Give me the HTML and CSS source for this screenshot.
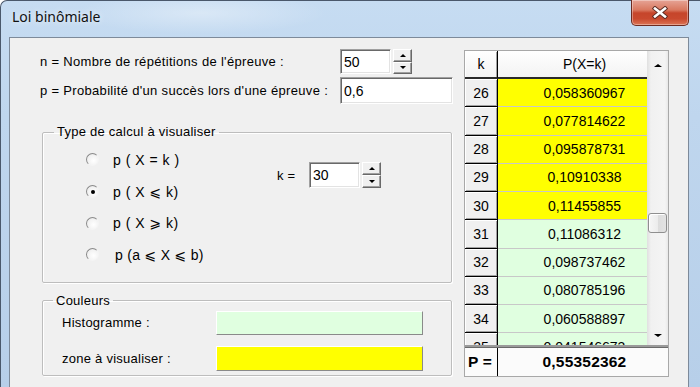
FILE: index.html
```html
<!DOCTYPE html>
<html lang="fr">
<head>
<meta charset="utf-8">
<title>Loi binômiale</title>
<link rel="stylesheet" href="styles.css">
</head>
<body>
<div class="window">
  <div class="titlebar">
    <span class="title">Loi binômiale</span>
    <span class="close">
      <svg width="18" height="13" viewBox="0 0 18 13">
        <path d="M4 2.5 L14 10.5 M14 2.5 L4 10.5" stroke="#5a2a22" stroke-width="4.4" stroke-linecap="square"/>
        <path d="M4 2.5 L14 10.5 M14 2.5 L4 10.5" stroke="#ffffff" stroke-width="2.6" stroke-linecap="square"/>
      </svg>
    </span>
  </div>
  <div class="client">
    <div class="left">
      <div class="param">
        <span class="plabel">n = Nombre de répétitions de l'épreuve :</span>
        <span class="edit edit-n">50</span>
        <span class="spinner"><span class="sbtn"><span class="tri up"></span></span><span class="sbtn"><span class="tri down"></span></span></span>
      </div>
      <div class="param param-p">
        <span class="plabel">p = Probabilité d'un succès lors d'une épreuve :</span>
        <span class="edit edit-p">0,6</span>
      </div>
      <fieldset class="group group-type">
        <legend>Type de calcul à visualiser</legend>
        <div class="type-body">
          <ul class="radios">
            <li><span class="radio"></span><span class="rlabel">p ( X = k )</span></li>
            <li><span class="radio checked"></span><span class="rlabel">p ( X ⩽ k)</span></li>
            <li><span class="radio"></span><span class="rlabel">p ( X ⩾ k)</span></li>
            <li><span class="radio"></span><span class="rlabel r4">p (a ⩽ X ⩽ b)</span></li>
          </ul>
          <div class="kfield">
            <span class="klabel">k =</span>
            <span class="edit edit-k">30</span>
            <span class="spinner"><span class="sbtn"><span class="tri up"></span></span><span class="sbtn"><span class="tri down"></span></span></span>
          </div>
        </div>
      </fieldset>
      <fieldset class="group group-colors">
        <legend>Couleurs</legend>
        <div class="color-row"><span class="clabel">Histogramme :</span><span class="swatch green"></span></div>
        <div class="color-row second"><span class="clabel">zone à visualiser :</span><span class="swatch yellow"></span></div>
      </fieldset>
    </div>
    <div class="datagrid">
      <div class="viewport">
        <div class="cells">
          <div class="hd hk">k</div><div class="hd hp">P(X=k)</div>
          <div class="kc">26</div><div class="vc y">0,058360967</div>
          <div class="kc">27</div><div class="vc y">0,077814622</div>
          <div class="kc">28</div><div class="vc y">0,095878731</div>
          <div class="kc">29</div><div class="vc y">0,10910338</div>
          <div class="kc">30</div><div class="vc y">0,11455855</div>
          <div class="kc">31</div><div class="vc g">0,11086312</div>
          <div class="kc">32</div><div class="vc g">0,098737462</div>
          <div class="kc">33</div><div class="vc g">0,080785196</div>
          <div class="kc">34</div><div class="vc g">0,060588897</div>
          <div class="kc">35</div><div class="vc g">0,041546673</div>
        </div>
        <div class="vscroll">
          <div class="sarrow"><span class="tri up"></span></div>
          <div class="track"><div class="thumb"></div></div>
          <div class="sarrow bottom"><span class="tri down"></span></div>
        </div>
      </div>
      <div class="sep"></div>
      <div class="total">
        <span class="tlabel">P =</span>
        <span class="tvalue">0,55352362</span>
      </div>
    </div>
  </div>
</div>
</body>
</html>
```
FILE: styles.css
```css
* { box-sizing: border-box; }
html, body { margin: 0; padding: 0; }
body {
  width: 700px;
  height: 387px;
  overflow: hidden;
  font-family: "Liberation Sans", Arial, "DejaVu Sans", sans-serif;
  font-size: 13px;
  letter-spacing: 0.25px;
  color: #000;
  background: #fff;
}

.window {
  width: 700px;
  height: 387px;
  display: flex;
  flex-direction: column;
  border-left: 1px solid #4a586b;
  border-top: 1px solid #4a586b;
  border-top-left-radius: 7px;
  background:
    radial-gradient(ellipse 180px 30px at 200px 12px, rgba(255,255,255,0.35), rgba(255,255,255,0) 70%),
    linear-gradient(180deg, #c6dcf2 0%, #bfd6ee 30%, #b7cfe9 100%);
}

.titlebar {
  height: 36px;
  display: flex;
  align-items: flex-start;
  flex: none;
}
.title {
  font-family: "Noto Sans", "Open Sans", sans-serif;
  font-size: 14px;
  letter-spacing: 0;
  line-height: 20px;
  margin: 6px 0 0 11px;
  color: #111;
  text-shadow: 0 0 6px rgba(255,255,255,0.9);
}
.close {
  margin: -1px 11px 0 auto;
  width: 58px;
  height: 26px;
  display: flex;
  align-items: center;
  justify-content: center;
  border: 1px solid #6e2b21;
  border-top: none;
  border-radius: 0 0 5px 5px;
  background: linear-gradient(180deg, #e6a496 0%, #d9785f 40%, #c6452b 52%, #c9492e 75%, #dc7455 100%);
  box-shadow: inset 0 0 0 1px rgba(255,255,255,0.35);
}
.close svg { display: block; }

.client {
  flex: 1;
  margin: 0 11px 0 8px;
  border: 1px solid #7d8a9a;
  border-bottom: none;
  background: #f0f0f0;
  display: flex;
  align-items: flex-start;
  padding: 11px 0 0 30px;
}

.left { width: 413px; flex: none; }

.param {
  display: flex;
  align-items: center;
  height: 25px;
}
.param-p { margin-top: 3px; height: 27px; }
.plabel { width: 300px; flex: none; letter-spacing: 0.32px; }

.edit {
  display: flex;
  align-items: center;
  height: 100%;
  padding: 0 0 0 3px;
  background: #fff;
  font-size: 14px;
  letter-spacing: 0;
  border: 1px solid;
  border-color: #a0a0a0 #ffffff #ffffff #a0a0a0;
  box-shadow: inset 1px 1px 0 #696969, inset -1px -1px 0 #e3e3e3;
}
.edit-n { width: 51px; }
.edit-p { width: 113px; }
.edit-k { width: 51px; height: 26px; }

.spinner {
  display: flex;
  flex-direction: column;
  width: 19px;
  height: 25px;
  margin-left: 2px;
}
.sbtn {
  flex: 1;
  display: flex;
  align-items: center;
  justify-content: center;
  background: #f0f0f0;
  border: 1px solid;
  border-color: #ffffff #696969 #696969 #ffffff;
  box-shadow: inset -1px -1px 0 #a0a0a0;
}
.tri {
  width: 0;
  height: 0;
  border-left: 3px solid transparent;
  border-right: 3px solid transparent;
}
.tri.up { border-bottom: 3px solid #000; }
.tri.down { border-top: 3px solid #000; }

.group {
  margin: 20px 0 0 2px;
  padding: 0;
  width: 410px;
  border: 1px solid #bdbdbd;
  border-radius: 2px;
  box-shadow: 1px 1px 0 #fff, inset 1px 1px 0 #fff;
}
.group legend {
  margin-left: 11px;
  padding: 0 3px;
  line-height: 16px;
}

.type-body {
  display: flex;
  align-items: flex-start;
  padding: 4px 0 11px 0;
}
.radios {
  list-style: none;
  margin: 0;
  padding: 0 0 0 43px;
  width: 234px;
  flex: none;
}
.radios li {
  height: 31.7px;
  display: flex;
  align-items: center;
}
.radio {
  width: 13px;
  height: 13px;
  border-radius: 50%;
  flex: none;
  border: 1px solid;
  border-color: #8a8a8a #f4f4f4 #f4f4f4 #8a8a8a;
  background: radial-gradient(circle at 60% 60%, #ffffff 0%, #f2f2f2 60%, #dcdcdc 100%);
  position: relative;
}
.radio.checked::after {
  content: "";
  position: absolute;
  left: 3.5px;
  top: 3.5px;
  width: 4px;
  height: 4px;
  border-radius: 50%;
  background: #000;
}
.rlabel {
  margin-left: 14px;
  font-size: 14px;
  letter-spacing: 0.5px;
}
.r4 { margin-left: 16px; letter-spacing: 0.3px; }

.kfield {
  display: flex;
  align-items: center;
  height: 26px;
  margin-top: 18px;
}
.klabel { width: 32px; flex: none; }
.kfield .spinner { height: 26px; margin-left: 2px; }

.group-colors { margin-top: 10px; }
.group-colors legend { margin-left: 10px; }
.color-row {
  display: flex;
  align-items: center;
  height: 24px;
  margin-top: 2px;
}
.color-row.second { margin-top: 11px; height: 25px; margin-bottom: 4px; }
.clabel {
  width: 173px;
  flex: none;
  padding-left: 19px;
}
.swatch {
  width: 207px;
  height: 100%;
  border: 1px solid;
  border-color: #ffffff #8a8a8a #8a8a8a #ffffff;
}
.swatch.green { background: #e0ffe0; }
.swatch.yellow { background: #ffff00; }

.datagrid {
  margin: 1px 0 0 11px;
  width: 205px;
  height: 327px;
  flex: none;
  border: 1px solid #a8a8a8;
  background: #fff;
  display: flex;
  flex-direction: column;
}
.viewport {
  display: flex;
  height: 294px;
  overflow: hidden;
  flex: none;
}
.cells {
  width: 182px;
  flex: none;
  display: grid;
  grid-template-columns: 33px 149px;
  grid-template-rows: 28px;
  grid-auto-rows: 28.25px;
  align-content: start;
  font-size: 14px;
  letter-spacing: 0;
}
.hd, .kc, .vc {
  display: flex;
  align-items: center;
  justify-content: center;
}
.hd {
  background: linear-gradient(180deg, #ffffff, #f3f3f3);
  border-bottom: 2px solid #2a2a2a;
}
.hk {
  border-right: 1px solid #000;
  box-shadow: inset 1px 1px 0 #fff, inset -1px 0 0 #a0a0a0;
}
.hp { padding-left: 24px; }
.kc {
  background: #f0f0f0;
  border-right: 1px solid #000;
  border-bottom: 1px solid #000;
  box-shadow: inset 1px 1px 0 #fff, inset -1px -1px 0 #a0a0a0;
}
.vc {
  padding-left: 24px;
  border-bottom: 1px solid #c8c8c8;
}
.vc.y { background: #ffff00; }
.vc.g { background: #e0ffe0; }

.vscroll {
  width: 21px;
  flex: none;
  display: flex;
  flex-direction: column;
  background: linear-gradient(90deg, #e4e4e4 0%, #f1f1f1 15%, #f4f4f4 85%, #e8e8e8 100%);
  border-left: 1px solid #e2e2e2;
}
.sarrow {
  height: 26px;
  flex: none;
  display: flex;
  align-items: center;
  justify-content: center;
  padding-top: 2px;
}
.sarrow .tri { border-left-width: 4px; border-right-width: 4px; }
.sarrow.bottom { height: 20px; padding-top: 0; }
.track { flex: 1; }
.thumb {
  margin: 136px 0 0 0;
  width: 19px;
  height: 20px;
  border: 1px solid #8f8f8f;
  border-radius: 3px;
  background: linear-gradient(90deg, #f6f6f6 0%, #ececec 50%, #dcdcdc 51%, #e2e2e2 100%);
  box-shadow: inset 1px 1px 0 #fff;
}
.sep {
  height: 3px;
  flex: none;
  background: #9a9a9a;
  border-bottom: 1px solid #6a6a6a;
}
.total {
  flex: 1;
  display: flex;
  font-weight: bold;
  font-size: 15.5px;
  letter-spacing: 0.2px;
  background: #fbfbfb;
}
.tlabel {
  width: 33px;
  flex: none;
  display: flex;
  align-items: center;
  padding-left: 3px;
  border-right: 1px solid #000;
}
.tvalue {
  flex: 1;
  display: flex;
  align-items: center;
  justify-content: center;
  padding-left: 3px;
}
```
